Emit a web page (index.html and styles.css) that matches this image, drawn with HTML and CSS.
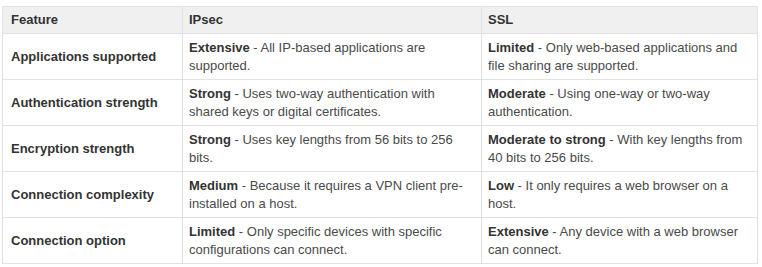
FILE: index.html
```html
<!doctype html>
<html>
    <head>
        <meta charset="utf-8" />
        <title>IPsec vs SSL</title>
        <link rel="stylesheet" href="styles.css">
    </head>
    <body>
        <table class="compare">
            <colgroup>
                <col class="c-feature" />
                <col class="c-ipsec" />
                <col class="c-ssl" />
            </colgroup>
            <thead>
                <tr>
                    <th>Feature</th>
                    <th>IPsec</th>
                    <th>SSL</th>
                </tr>
            </thead>
            <tbody>
                <tr>
                    <th>Applications supported</th>
                    <td><b>Extensive</b> - All IP-based applications are supported.</td>
                    <td><b>Limited</b> - Only web-based applications and file sharing are supported.</td>
                </tr>
                <tr>
                    <th>Authentication strength</th>
                    <td><b>Strong</b> - Uses two-way authentication with shared keys or digital certificates.</td>
                    <td><b>Moderate</b> - Using one-way or two-way authentication.</td>
                </tr>
                <tr>
                    <th>Encryption strength</th>
                    <td><b>Strong</b> - Uses key lengths from 56 bits to 256 bits.</td>
                    <td><b>Moderate to strong</b> - With key lengths from 40 bits to 256 bits.</td>
                </tr>
                <tr>
                    <th>Connection complexity</th>
                    <td><b>Medium</b> - Because it requires a VPN client pre-installed on a host.</td>
                    <td><b>Low</b> - It only requires a web browser on a host.</td>
                </tr>
                <tr>
                    <th>Connection option</th>
                    <td><b>Limited</b> - Only specific devices with specific configurations can connect.</td>
                    <td><b>Extensive</b> - Any device with a web browser can connect.</td>
                </tr>
            </tbody>
        </table>
    </body>
</html>
```

FILE: styles.css
```css
html, body {
    margin: 0px;
    padding: 0px;
    background: #fff;
}

body {
    font-family: "Liberation Sans", Arial, sans-serif;
    font-size: 13px;
    color: #333;
    padding: 6px 0px 0px 2px;
}

.compare {
    border-collapse: collapse;
    table-layout: fixed;
    width: 755px;
}

.c-feature { width: 180px; }
.c-ipsec { width: 299px; }
.c-ssl { width: 276px; }

.compare th,
.compare td {
    border: 1px solid #e2e2e2;
    padding: 4px 6px;
    line-height: 18px;
    text-align: left;
    vertical-align: middle;
}

.compare th:first-child {
    padding-left: 8px;
}

.compare thead th {
    background-color: #f0f0f0;
}

.compare tbody th,
.compare tbody td {
    padding-top: 5px;
    padding-bottom: 4px;
}

.compare td {
    color: #4a4a4a;
}

.compare b {
    font-weight: bold;
    color: #333;
}
```
